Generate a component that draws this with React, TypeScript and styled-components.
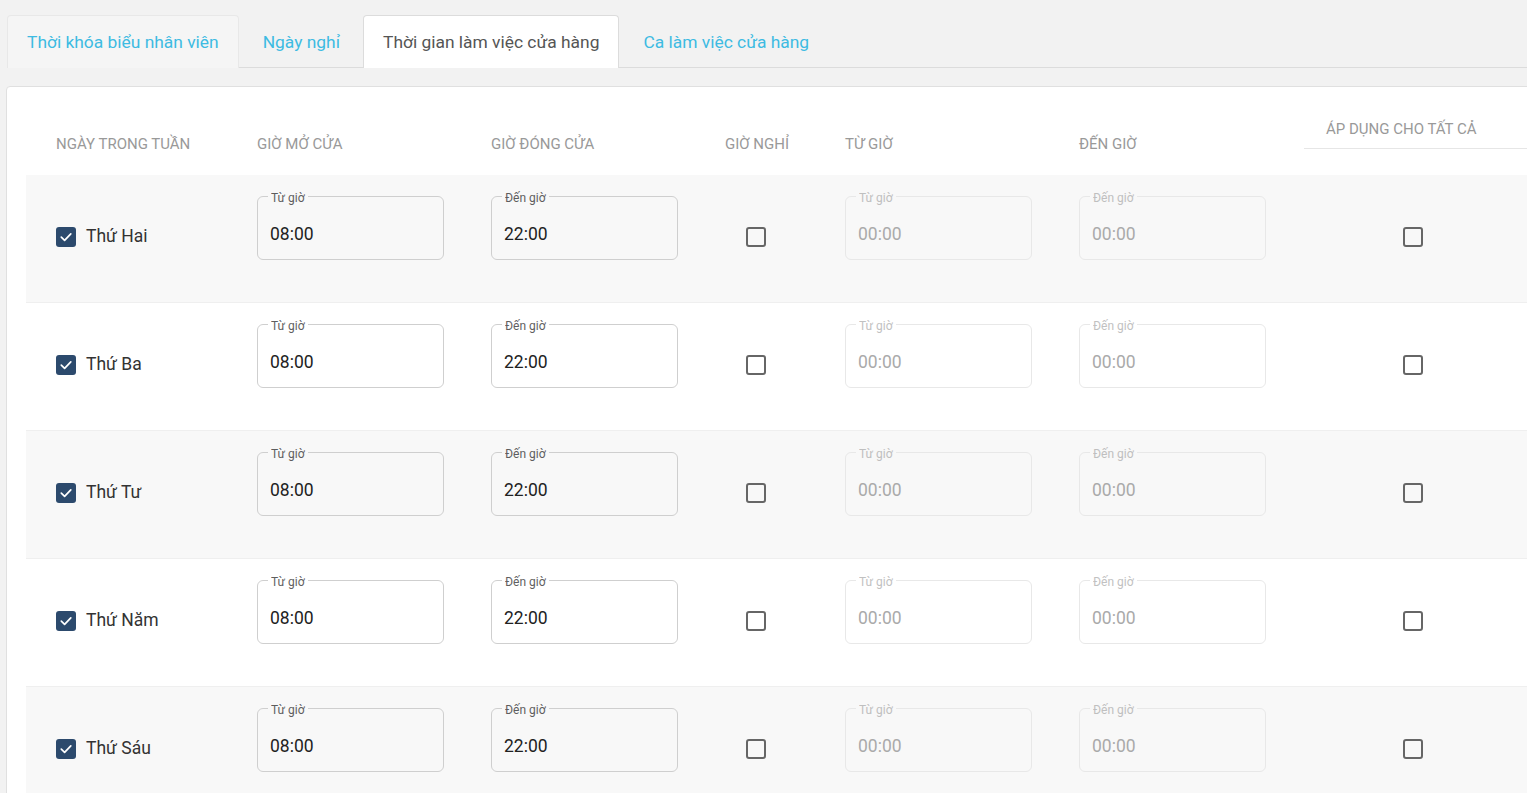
import styled, { createGlobalStyle } from "styled-components";

const GlobalStyle = createGlobalStyle`
  html, body {
    margin: 0;
    padding: 0;
    background: #f2f2f2;
    overflow: hidden;
    font-family: Roboto, "Noto Sans", Arial, sans-serif;
  }
`;

type Day = { name: string; checked: boolean };

const days: Day[] = [
  { name: "Thứ Hai", checked: true },
  { name: "Thứ Ba", checked: true },
  { name: "Thứ Tư", checked: true },
  { name: "Thứ Năm", checked: true },
  { name: "Thứ Sáu", checked: true },
];

const tabs = [
  { label: "Thời khóa biểu nhân viên", active: false, boxed: true },
  { label: "Ngày nghỉ", active: false, boxed: false },
  { label: "Thời gian làm việc cửa hàng", active: true, boxed: false },
  { label: "Ca làm việc cửa hàng", active: false, boxed: false },
];

const Checkbox = ({ checked }: { checked: boolean }) => (
  <Box $checked={checked}>
    {checked && (
      <svg width="14" height="14" viewBox="0 0 14 14">
        <path d="M2.3 7.2 L5.6 10.4 L11.8 3.8" fill="none" stroke="#fff" strokeWidth="1.7" strokeLinecap="round" strokeLinejoin="round" />
      </svg>
    )}
  </Box>
);

const TimeField = ({ label, value, disabled }: { label: string; value: string; disabled?: boolean }) => (
  <Field $disabled={disabled}>
    <Legend>
      <LegendText>{label}</LegendText>
    </Legend>
    <Value>{value}</Value>
  </Field>
);

export default function App() {
  return (
    <Page>
      <GlobalStyle />
      <TabBar>
        {tabs.map((t) => (
          <Tab key={t.label} $active={t.active} $boxed={t.boxed}>
            {t.label}
          </Tab>
        ))}
      </TabBar>
      <Card>
        <HeadRow>
          <HeadCell>Ngày trong tuần</HeadCell>
          <HeadCell>Giờ mở cửa</HeadCell>
          <HeadCell>Giờ đóng cửa</HeadCell>
          <HeadCell>Giờ nghỉ</HeadCell>
          <HeadCell>Từ giờ</HeadCell>
          <HeadCell>Đến giờ</HeadCell>
          <ApplyHead>Áp dụng cho tất cả</ApplyHead>
        </HeadRow>
        {days.map((d, i) => (
          <Row key={d.name} $shaded={i % 2 === 0}>
            <DayCell>
              <Checkbox checked={d.checked} />
              <DayName>{d.name}</DayName>
            </DayCell>
            <TimeField label="Từ giờ" value="08:00" />
            <TimeField label="Đến giờ" value="22:00" />
            <BoxCell $offset={21}>
              <Checkbox checked={false} />
            </BoxCell>
            <TimeField label="Từ giờ" value="00:00" disabled />
            <TimeField label="Đến giờ" value="00:00" disabled />
            <BoxCell $offset={99}>
              <Checkbox checked={false} />
            </BoxCell>
          </Row>
        ))}
      </Card>
    </Page>
  );
}

const Page = styled.div`
  padding: 15px 0 0 6px;
  width: 1560px;
`;

const TabBar = styled.div`
  display: flex;
  margin-left: 1px;
  border-bottom: 1px solid #dcdcdc;
  height: 52px;
`;

const Tab = styled.div<{ $active: boolean; $boxed: boolean }>`
  display: flex;
  align-items: center;
  padding: ${(p) => (p.$active || p.$boxed ? "0 19px" : "0 22px 0 23px")};
  font-size: 17.4px;
  color: ${(p) => (p.$active ? "#555" : "#3dbbe2")};
  background: ${(p) => (p.$active ? "#fff" : p.$boxed ? "#f5f5f5" : "transparent")};
  border: 1px solid ${(p) => (p.$active ? "#dcdcdc" : p.$boxed ? "#e8e8e8" : "transparent")};
  border-bottom: none;
  border-radius: 4px 4px 0 0;
  margin-bottom: -1px;
  ${(p) => (p.$active ? "height: 53px; box-sizing: border-box;" : "")}
`;

const Card = styled.div`
  margin-top: 18px;
  background: #fff;
  border: 1px solid #e0e0e0;
  border-radius: 4px;
  padding: 0 0 0 19px;
`;

const columns = "201px 234px 234px 120px 234px 225px 250px";

const HeadRow = styled.div`
  display: grid;
  grid-template-columns: ${columns};
  align-items: end;
  height: 88px;
  padding: 0 0 22px 30px;
  box-sizing: border-box;
`;

const HeadCell = styled.div`
  font-size: 15px;
  line-height: 18px;
  color: #999;
  text-transform: uppercase;
`;

const ApplyHead = styled(HeadCell)`
  margin-bottom: 4px;
  padding: 0 0 10px 22px;
  border-bottom: 1px solid #e6e6e6;
`;

const Row = styled.div<{ $shaded: boolean }>`
  display: grid;
  grid-template-columns: ${columns};
  align-items: start;
  height: 128px;
  padding: 17px 0 0 30px;
  box-sizing: border-box;
  background: ${(p) => (p.$shaded ? "#f8f8f8" : "#fff")};
  border-bottom: 1px solid #efefef;
`;

const DayCell = styled.div`
  display: flex;
  align-items: center;
  gap: 10px;
  margin-top: 35px;
`;

const DayName = styled.span`
  font-size: 17.5px;
  color: #333;
  position: relative;
  top: -1px;
`;

const BoxCell = styled.div<{ $offset: number }>`
  margin: 35px 0 0 ${(p) => p.$offset}px;
`;

const Box = styled.div<{ $checked: boolean }>`
  width: 20px;
  height: 20px;
  box-sizing: border-box;
  border-radius: 3px;
  display: flex;
  align-items: center;
  justify-content: center;
  background: ${(p) => (p.$checked ? "#2c4a6d" : "transparent")};
  border: ${(p) => (p.$checked ? "none" : "2px solid #666")};
`;

const Field = styled.fieldset<{ $disabled?: boolean }>`
  margin: 0;
  width: 187px;
  box-sizing: border-box;
  padding: 0 12px 14px;
  border: 1px solid ${(p) => (p.$disabled ? "#e8e8e8" : "#cfcfcf")};
  border-radius: 6px;
  color: ${(p) => (p.$disabled ? "#aaa" : "#222")};
  min-width: 0;
`;

const Legend = styled.legend`
  font-size: 12px;
  line-height: 8px;
  padding: 0 3px;
  margin-left: -2px;
  color: inherit;
  opacity: 0.72;
`;

const LegendText = styled.span`
  position: relative;
  top: 2px;
`;

const Value = styled.div`
  margin-top: 23px;
  font-size: 17.5px;
  line-height: 22px;
`;
